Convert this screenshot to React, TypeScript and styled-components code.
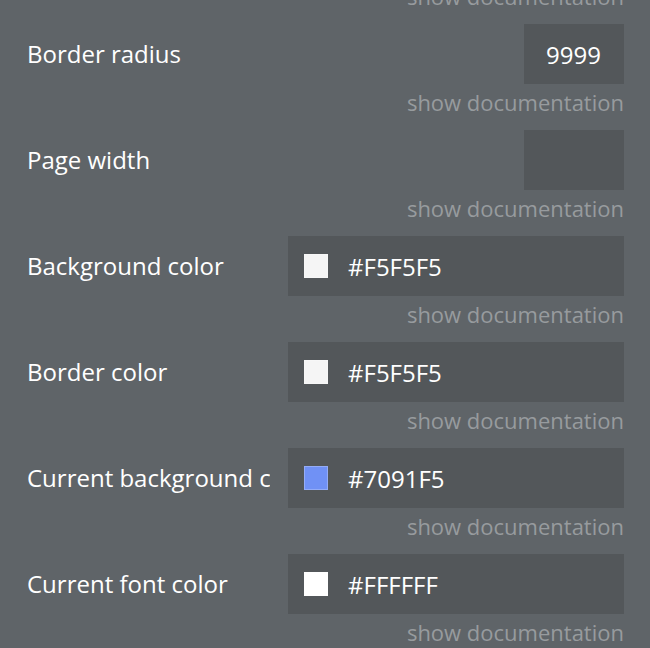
import React from 'react'
import styled, { createGlobalStyle } from 'styled-components'

const GlobalStyle = createGlobalStyle`
	html, body {
		margin: 0;
		padding: 0;
		background: #5f6468;
		overflow: hidden;
	}
	body {
		font-family: 'Open Sans', 'Noto Sans', sans-serif;
	}
`

const Panel = styled.div`
	width: 650px;
	height: 648px;
	overflow: hidden;
	background: #5f6468;
	box-sizing: border-box;
	padding: 0 26px 0 27px;
`

const Scroller = styled.div`
	margin-top: -22px;
`

const Row = styled.div`
	display: flex;
	align-items: center;
	height: 60px;
	gap: 18px;
`

const Label = styled.div`
	width: 243px;
	flex: none;
	color: #ffffff;
	font-size: 24px;
	font-weight: 400;
	white-space: nowrap;
	overflow: hidden;
	padding-bottom: 2px;
`

const Input = styled.div<{ $narrow?: boolean }>`
	margin-left: auto;
	width: ${(p) => (p.$narrow ? '100px' : '336px')};
	height: 60px;
	box-sizing: border-box;
	background: #53575a;
	display: flex;
	align-items: center;
	justify-content: ${(p) => (p.$narrow ? 'flex-end' : 'flex-start')};
	padding: ${(p) => (p.$narrow ? '0 23px 0 0' : '0 0 0 16px')};
	color: #ffffff;
	font-size: 24px;
`

const Swatch = styled.span<{ $color: string }>`
	width: 24px;
	height: 24px;
	box-sizing: border-box;
	background: ${(p) => p.$color};
	border: 1px solid rgba(255, 255, 255, 0.25);
	margin-right: 20px;
	flex: none;
`

const Doc = styled.div`
	height: 46px;
	display: flex;
	justify-content: flex-end;
	align-items: flex-start;
	padding-top: 3px;
	box-sizing: border-box;
	color: #979b9e;
	font-size: 22px;
	line-height: 30px;
	white-space: nowrap;
`

type Prop = { label: string; value?: string; color?: string; narrow?: boolean }

const props: Prop[] = [
	{ label: 'Border radius', value: '9999', narrow: true },
	{ label: 'Page width', value: '', narrow: true },
	{ label: 'Background color', value: '#F5F5F5', color: '#F5F5F5' },
	{ label: 'Border color', value: '#F5F5F5', color: '#F5F5F5' },
	{ label: 'Current background color', value: '#7091F5', color: '#7091F5' },
	{ label: 'Current font color', value: '#FFFFFF', color: '#FFFFFF' },
]

export default function App() {
	return (
		<Panel>
			<GlobalStyle />
			<Scroller>
				<Doc>show documentation</Doc>
				{props.map((p) => (
					<React.Fragment key={p.label}>
						<Row>
							<Label>{p.label}</Label>
							<Input $narrow={p.narrow}>
								{p.color && <Swatch $color={p.color} />}
								{p.value}
							</Input>
						</Row>
						<Doc>show documentation</Doc>
					</React.Fragment>
				))}
			</Scroller>
		</Panel>
	)
}
